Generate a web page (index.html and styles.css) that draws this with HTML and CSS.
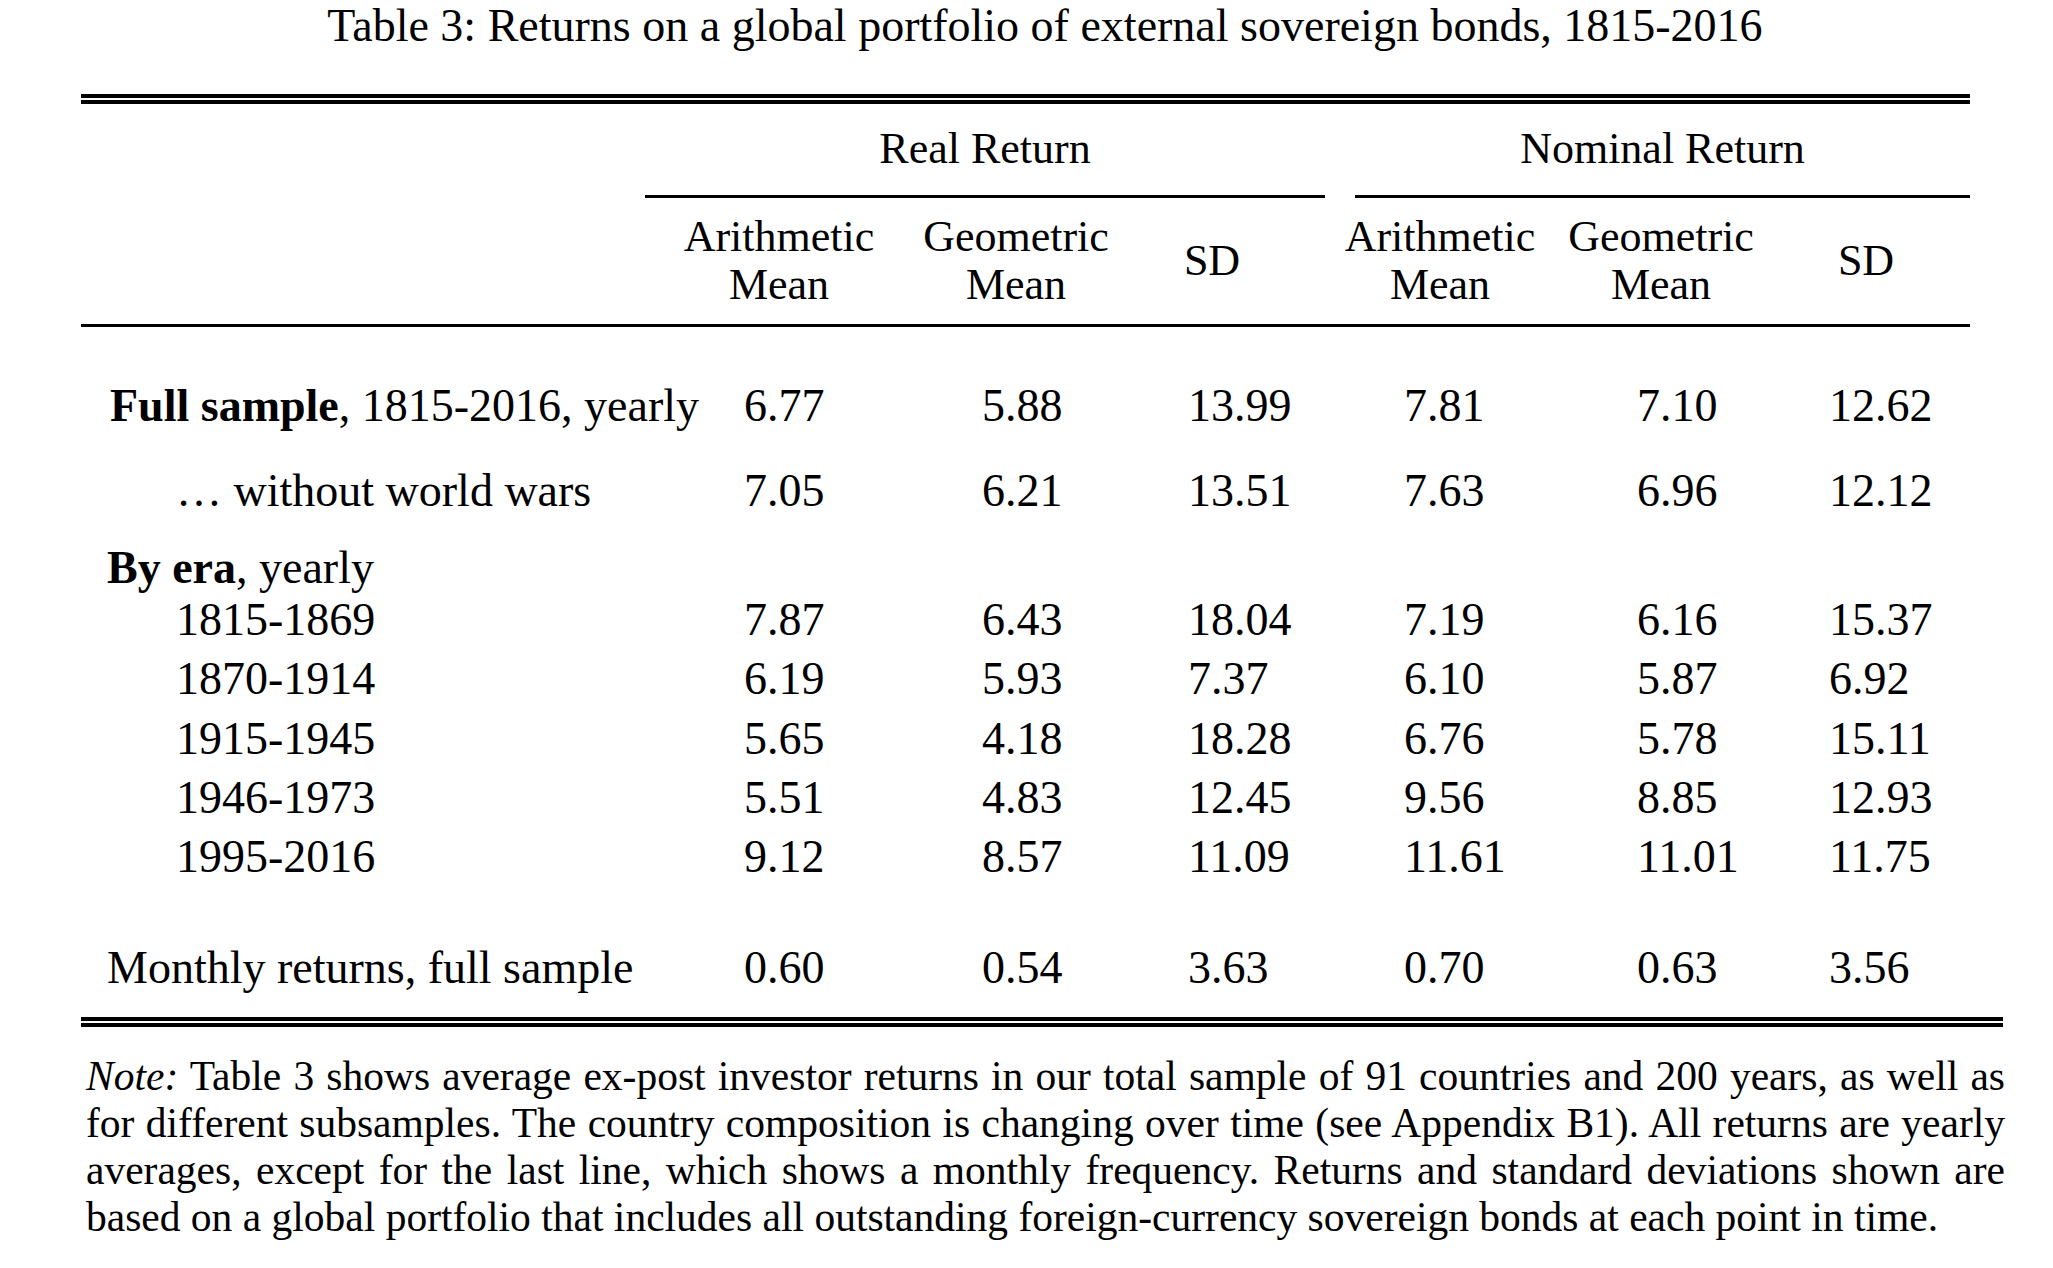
FILE: index.html
```html
<!DOCTYPE html>
<html lang="en">
<head>
<meta charset="utf-8">
<title>Table 3</title>
<link rel="stylesheet" href="styles.css">
</head>
<body>
<h1 class="title">Table 3: Returns on a global portfolio of external sovereign bonds, 1815-2016</h1>
<div class="table">
  <div class="rule-double"></div>
  <div class="row group-row">
    <div class="c0"></div>
    <div class="group group-real">Real Return</div>
    <div class="group group-nom">Nominal Return</div>
  </div>
  <div class="row sub-row">
    <div class="c0"></div>
    <div class="sub">Arithmetic<br>Mean</div>
    <div class="sub">Geometric<br>Mean</div>
    <div class="sub sd">SD</div>
    <div class="gap"></div>
    <div class="sub">Arithmetic<br>Mean</div>
    <div class="sub">Geometric<br>Mean</div>
    <div class="sub sd">SD</div>
    <div class="gap"></div>
  </div>
  <div class="rule-single"></div>

  <div class="row data first">
    <div class="label lab-full"><b>Full sample</b>, 1815-2016, yearly</div>
    <div class="n n1">6.77</div><div class="n n2">5.88</div><div class="n n3">13.99</div><div class="gap"></div>
    <div class="n n4">7.81</div><div class="n n5">7.10</div><div class="n n6">12.62</div><div class="gap"></div>
  </div>
  <div class="row data second">
    <div class="label lab-indent">&hellip; without world wars</div>
    <div class="n n1">7.05</div><div class="n n2">6.21</div><div class="n n3">13.51</div><div class="gap"></div>
    <div class="n n4">7.63</div><div class="n n5">6.96</div><div class="n n6">12.12</div><div class="gap"></div>
  </div>
  <div class="row data era-head">
    <div class="label lab-main"><b>By era</b>, yearly</div>
  </div>
  <div class="row data era">
    <div class="label lab-indent">1815-1869</div>
    <div class="n n1">7.87</div><div class="n n2">6.43</div><div class="n n3">18.04</div><div class="gap"></div>
    <div class="n n4">7.19</div><div class="n n5">6.16</div><div class="n n6">15.37</div><div class="gap"></div>
  </div>
  <div class="row data era">
    <div class="label lab-indent">1870-1914</div>
    <div class="n n1">6.19</div><div class="n n2">5.93</div><div class="n n3">7.37</div><div class="gap"></div>
    <div class="n n4">6.10</div><div class="n n5">5.87</div><div class="n n6">6.92</div><div class="gap"></div>
  </div>
  <div class="row data era">
    <div class="label lab-indent">1915-1945</div>
    <div class="n n1">5.65</div><div class="n n2">4.18</div><div class="n n3">18.28</div><div class="gap"></div>
    <div class="n n4">6.76</div><div class="n n5">5.78</div><div class="n n6">15.11</div><div class="gap"></div>
  </div>
  <div class="row data era">
    <div class="label lab-indent">1946-1973</div>
    <div class="n n1">5.51</div><div class="n n2">4.83</div><div class="n n3">12.45</div><div class="gap"></div>
    <div class="n n4">9.56</div><div class="n n5">8.85</div><div class="n n6">12.93</div><div class="gap"></div>
  </div>
  <div class="row data era">
    <div class="label lab-indent">1995-2016</div>
    <div class="n n1">9.12</div><div class="n n2">8.57</div><div class="n n3">11.09</div><div class="gap"></div>
    <div class="n n4">11.61</div><div class="n n5">11.01</div><div class="n n6">11.75</div><div class="gap"></div>
  </div>
  <div class="row data monthly">
    <div class="label lab-main">Monthly returns, full sample</div>
    <div class="n n1">0.60</div><div class="n n2">0.54</div><div class="n n3">3.63</div><div class="gap"></div>
    <div class="n n4">0.70</div><div class="n n5">0.63</div><div class="n n6">3.56</div><div class="gap"></div>
  </div>
</div>
<div class="rule-double bottom"></div>
<div class="note">
  <span class="line"><i>Note:</i> Table 3 shows average ex-post investor returns in our total sample of 91 countries and 200 years, as well as</span>
  <span class="line">for different subsamples. The country composition is changing over time (see Appendix B1). All returns are yearly</span>
  <span class="line">averages, except for the last line, which shows a monthly frequency. Returns and standard deviations shown are</span>
  <span class="line last">based on a global portfolio that includes all outstanding foreign-currency sovereign bonds at each point in time.</span>
</div>
</body>
</html>
```
FILE: styles.css
```css
html, body {
  margin: 0;
  padding: 0;
  background: #ffffff;
  color: #000000;
  font-family: "Liberation Serif", "Times New Roman", serif;
}

.title {
  margin: 0;
  padding-left: 37px;
  font-size: 46px;
  font-weight: normal;
  line-height: 52px;
  text-align: center;
}

.table {
  margin: 42px 0 0 81px;
  width: 1889px;
}

.rule-double {
  height: 2px;
  border-top: 4px solid #000;
  border-bottom: 4px solid #000;
}

.rule-double.bottom {
  width: 1922px;
  margin: 20px 0 0 81px;
}

.rule-single {
  height: 0;
  border-top: 3px solid #000;
  margin-top: 15px;
}

.row {
  display: grid;
  grid-template-columns: 564px 268px 206px 186px 35px 200px 242px 168px 20px;
  font-size: 44px;
  line-height: 59px;
  white-space: nowrap;
}

.row.data {
  font-size: 46px;
}

.group-row {
  margin-top: 15px;
}

.group {
  text-align: center;
  padding-bottom: 17px;
  border-bottom: 3px solid #000;
}

.group-real {
  grid-column: 2 / 5;
  margin-right: -20px;
}

.group-nom {
  grid-column: 6 / 10;
  margin-left: 15px;
}

.sub-row {
  margin-top: 15px;
  line-height: 48px;
}

.sub {
  text-align: center;
}

.sub.sd {
  align-self: center;
}

.data.first {
  margin-top: 49px;
}

.data.second {
  margin-top: 26px;
}

.data.era-head {
  margin-top: 26px;
  line-height: 44px;
}

.data.era {
  line-height: 59.3px;
}

.data.monthly {
  margin-top: 52px;
}

.label b {
  font-weight: bold;
}

.lab-full { padding-left: 29px; }
.lab-main { padding-left: 26px; }
.lab-indent { padding-left: 95px; }

.n { text-align: left; }
.n1 { padding-left: 99px; }
.n2 { padding-left: 69px; }
.n3 { padding-left: 69px; }
.n4 { padding-left: 64px; }
.n5 { padding-left: 97px; }
.n6 { padding-left: 47px; }

.note {
  margin: 26px 0 0 86px;
  width: 1919px;
  font-size: 41.5px;
  line-height: 47px;
}

.note .line {
  display: block;
  text-align: justify;
  text-align-last: justify;
  white-space: nowrap;
}

.note .line.last {
  text-align: left;
  text-align-last: left;
}
```
